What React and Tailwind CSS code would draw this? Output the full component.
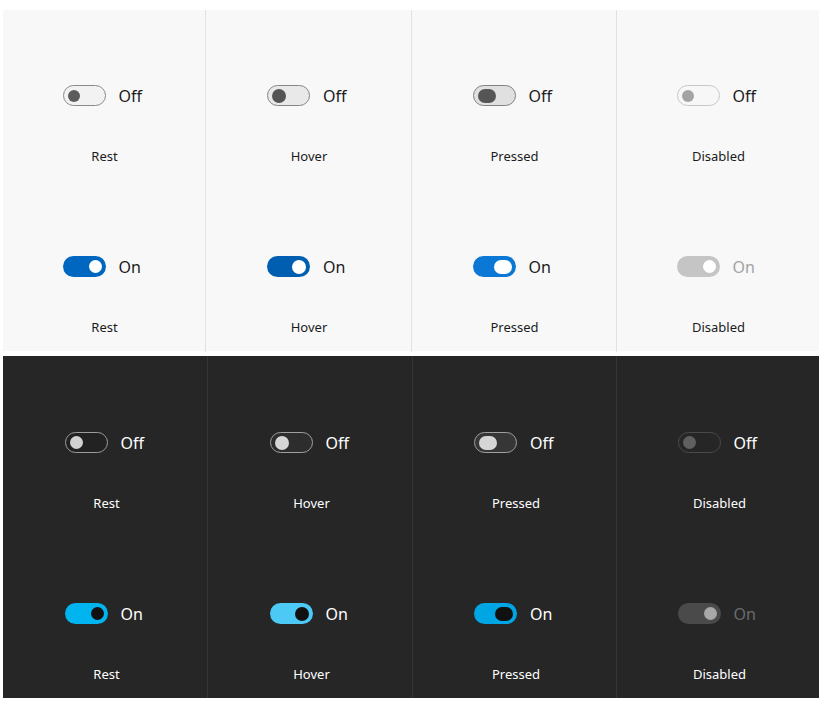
import React from 'react';

const states = ['Rest', 'Hover', 'Pressed', 'Disabled'];

// track + knob looks, per theme / on-off / state
const looks = {
  light: {
    off: {
      Rest: { track: 'bg-[#f2f2f2] border border-[#8a8a8a]', knob: 'w-[12px] h-[12px] bg-[#5c5c5c]' },
      Hover: { track: 'bg-[#e9e9e9] border border-[#858585]', knob: 'w-[14px] h-[14px] bg-[#555555]' },
      Pressed: { track: 'bg-[#e0e0e0] border border-[#808080]', knob: 'w-[18px] h-[14px] bg-[#555555]' },
      Disabled: { track: 'bg-[#f7f7f7] border border-[#c8c8c8]', knob: 'w-[12px] h-[12px] bg-[#a3a3a3]' },
    },
    on: {
      Rest: { track: 'bg-[#0067c0]', knob: 'w-[13px] h-[13px] bg-white' },
      Hover: { track: 'bg-[#005eb0]', knob: 'w-[14px] h-[14px] bg-white' },
      Pressed: { track: 'bg-[#0a78d4]', knob: 'w-[18px] h-[14px] bg-white' },
      Disabled: { track: 'bg-[#c5c5c5]', knob: 'w-[13px] h-[13px] bg-white' },
    },
  },
  dark: {
    off: {
      Rest: { track: 'bg-[#222222] border border-[#9c9c9c]', knob: 'w-[13px] h-[13px] bg-[#d2d2d2]' },
      Hover: { track: 'bg-[#2d2d2d] border border-[#a0a0a0]', knob: 'w-[14px] h-[14px] bg-[#d6d6d6]' },
      Pressed: { track: 'bg-[#363636] border border-[#a0a0a0]', knob: 'w-[18px] h-[14px] bg-[#d6d6d6]' },
      Disabled: { track: 'bg-[#262626] border border-[#4a4a4a]', knob: 'w-[13px] h-[13px] bg-[#5f5f5f]' },
    },
    on: {
      Rest: { track: 'bg-[#00b4f0]', knob: 'w-[13px] h-[13px] bg-[#111111]' },
      Hover: { track: 'bg-[#4ccaf5]', knob: 'w-[14px] h-[14px] bg-[#111111]' },
      Pressed: { track: 'bg-[#00a6e4]', knob: 'w-[18px] h-[14px] bg-[#111111]' },
      Disabled: { track: 'bg-[#4a4a4a]', knob: 'w-[13px] h-[13px] bg-[#a8a8a8]' },
    },
  },
};

function Toggle({ theme, on, state }) {
  const look = looks[theme][on ? 'on' : 'off'][state];
  const textColor =
    theme === 'light'
      ? state === 'Disabled' && on ? 'text-[#a3a3a3]' : 'text-[#1b1b1b]'
      : state === 'Disabled' && on ? 'text-[#6b6b6b]' : 'text-white';

  return (
    <div className="flex items-center gap-[13px]">
      <div
        className={`w-[43px] h-[21px] rounded-full flex items-center px-[4px] ${look.track} ${
          on ? 'justify-end' : 'justify-start'
        }`}
      >
        <div className={`rounded-full ${look.knob}`} />
      </div>
      <span className={`text-[16px] leading-[20px] w-[28px] ${textColor}`}>{on ? 'On' : 'Off'}</span>
    </div>
  );
}

function Cell({ theme, on, state }) {
  const labelColor = theme === 'light' ? 'text-[#1b1b1b]' : 'text-white';
  const pad = theme === 'light' ? 'pt-[75px] pl-[1px]' : 'pt-[76px] pl-[3px]';
  return (
    <div className={`h-[171px] flex flex-col items-center ${pad}`}>
      <Toggle theme={theme} on={on} state={state} />
      <div className={`mt-[41px] text-[13px] leading-[18px] ${labelColor}`}>{state}</div>
    </div>
  );
}

function Panel({ theme }) {
  const panelClass =
    theme === 'light'
      ? 'bg-[#f8f8f8] h-[341px] grid-cols-[203px_206px_205px_202px]'
      : 'bg-[#262626] h-[342px] mt-[5px] grid-cols-[205px_205px_204px_202px]';
  const divider = theme === 'light' ? 'border-[#e2e2e2]' : 'border-[#353535]';

  return (
    <div className={`ml-[3px] w-[816px] grid ${panelClass}`}>
      {states.map((s, i) => (
        <div key={s} className={`flex flex-col ${i < 3 ? `border-r ${divider}` : ''}`}>
          <Cell theme={theme} on={false} state={s} />
          <Cell theme={theme} on={true} state={s} />
        </div>
      ))}
    </div>
  );
}

export default function App() {
  return (
    <div className="w-[824px] h-[705px] bg-white pt-[10px] font-['Noto_Sans','Open_Sans',sans-serif]">
      <Panel theme="light" />
      <Panel theme="dark" />
    </div>
  );
}
